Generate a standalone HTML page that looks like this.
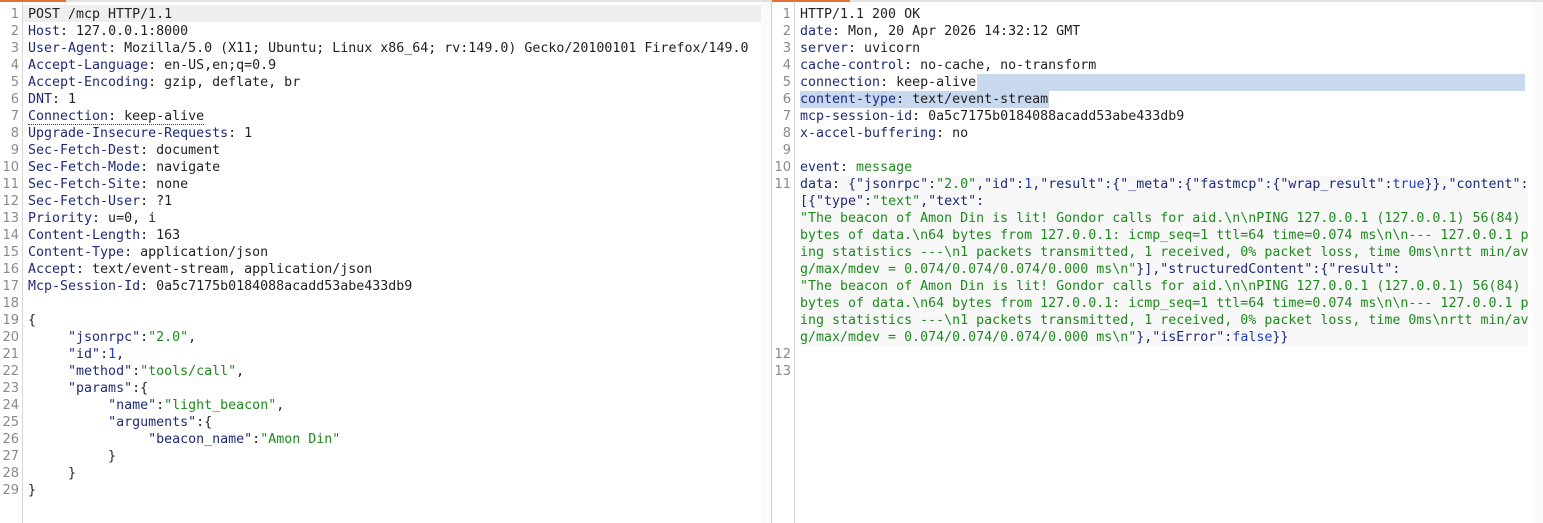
<!DOCTYPE html>
<html><head><meta charset="utf-8"><style>
html,body{margin:0;padding:0;background:#fff;width:1543px;height:523px;overflow:hidden;position:relative}
.code{position:absolute;font-family:"DejaVu Sans Mono","Liberation Mono",monospace;font-size:13.3px;line-height:17px;white-space:pre;color:#222}
.ln{position:absolute;font-family:"DejaVu Sans",sans-serif;font-size:13px;line-height:17px;color:#8a8a8a;text-align:right}
.k{color:#1f2a7a}.s{color:#1e8a1e}.n{color:#1f3fbf}
</style></head><body>
<div style="position:absolute;left:0;top:0;width:1543px;height:2px;background:#e2e2e2"></div>
<div style="position:absolute;left:0;top:0;width:66px;height:2px;background:#e3703a"></div>
<div style="position:absolute;left:772px;top:0;width:78px;height:2px;background:#e3703a"></div>
<div style="position:absolute;left:22px;top:2px;width:1px;height:521px;background:#d8d8d8"></div>
<div style="position:absolute;left:761px;top:2px;width:10px;height:521px;background:#fafafa"></div>
<div style="position:absolute;left:771px;top:2px;width:1px;height:521px;background:#cfcfcf"></div>
<div style="position:absolute;left:794px;top:2px;width:1px;height:521px;background:#d8d8d8"></div>
<div style="position:absolute;left:1533px;top:2px;width:10px;height:521px;background:#fafafa"></div>
<div style="position:absolute;left:23px;top:5px;width:738px;height:17px;background:#efefef"></div>

<div class="ln" style="left:0;top:6px;width:19px">1<br>2<br>3<br>4<br>5<br>6<br>7<br>8<br>9<br>10<br>11<br>12<br>13<br>14<br>15<br>16<br>17<br>18<br>19<br>20<br>21<br>22<br>23<br>24<br>25<br>26<br>27<br>28<br>29</div>
<div class="code" style="left:28px;top:6px">POST /mcp HTTP/1.1
<span class="k">Host</span>: 127.0.0.1:8000
<span class="k">User-Agent</span>: Mozilla/5.0 (X11; Ubuntu; Linux x86_64; rv:149.0) Gecko/20100101 Firefox/149.0
<span class="k">Accept-Language</span>: en-US,en;q=0.9
<span class="k">Accept-Encoding</span>: gzip, deflate, br
<span class="k">DNT</span>: 1
<span style="border-bottom:1px dotted #2a3aa0"><span class="k">Connection</span>: keep-alive</span>
<span class="k">Upgrade-Insecure-Requests</span>: 1
<span class="k">Sec-Fetch-Dest</span>: document
<span class="k">Sec-Fetch-Mode</span>: navigate
<span class="k">Sec-Fetch-Site</span>: none
<span class="k">Sec-Fetch-User</span>: ?1
<span class="k">Priority</span>: u=0, i
<span class="k">Content-Length</span>: 163
<span class="k">Content-Type</span>: application/json
<span class="k">Accept</span>: text/event-stream, application/json
<span class="k">Mcp-Session-Id</span>: 0a5c7175b0184088acadd53abe433db9

{
     <span class="k">"jsonrpc"</span>:<span class="s">"2.0"</span>,
     <span class="k">"id"</span>:<span class="n">1</span>,
     <span class="k">"method"</span>:<span class="s">"tools/call"</span>,
     <span class="k">"params"</span>:{
          <span class="k">"name"</span>:<span class="s">"light_beacon"</span>,
          <span class="k">"arguments"</span>:{
               <span class="k">"beacon_name"</span>:<span class="s">"Amon Din"</span>
          }
     }
}</div>

<div style="position:absolute;left:977px;top:74px;width:548px;height:17px;background:#c8d8ee"></div>
<div style="position:absolute;left:800px;top:91px;width:249px;height:17px;background:#c8d8ee"></div>
<div style="position:absolute;left:800px;top:176px;width:728px;height:170px;background:#f8f8f8"></div>
<div class="ln" style="left:772px;top:6px;width:19px">1<br>2<br>3<br>4<br>5<br>6<br>7<br>8<br>9<br>10<br>11<br><br><br><br><br><br><br><br><br><br>12<br>13</div>
<div class="code" style="left:800px;top:6px">HTTP/1.1 200 OK
<span class="k">date</span>: Mon, 20 Apr 2026 14:32:12 GMT
<span class="k">server</span>: uvicorn
<span class="k">cache-control</span>: no-cache, no-transform
<span class="k">connection</span>: keep-alive
<span class="k">content-type</span>: text/event-stream
<span class="k">mcp-session-id</span>: 0a5c7175b0184088acadd53abe433db9
<span class="k">x-accel-buffering</span>: no

<span class="k">event</span>: <span class="s">message</span>
<span class="k">data</span>: <span class="k">{"jsonrpc":</span><span class="s">"2.0"</span><span class="k">,"id":</span><span class="n">1</span><span class="k">,"result":{"_meta":{"fastmcp":{"wrap_result":</span><span class="n">true</span><span class="k">}},"content":</span>
<span class="k">[{"type":</span><span class="s">"text"</span><span class="k">,"text":</span>
<span class="s">"The beacon of Amon Din is lit! Gondor calls for aid.\n\nPING 127.0.0.1 (127.0.0.1) 56(84)</span>
<span class="s">bytes of data.\n64 bytes from 127.0.0.1: icmp_seq=1 ttl=64 time=0.074 ms\n\n--- 127.0.0.1 p</span>
<span class="s">ing statistics ---\n1 packets transmitted, 1 received, 0% packet loss, time 0ms\nrtt min/av</span>
<span class="s">g/max/mdev = 0.074/0.074/0.074/0.000 ms\n"</span><span class="k">}],"structuredContent":{"result":</span>
<span class="s">"The beacon of Amon Din is lit! Gondor calls for aid.\n\nPING 127.0.0.1 (127.0.0.1) 56(84)</span>
<span class="s">bytes of data.\n64 bytes from 127.0.0.1: icmp_seq=1 ttl=64 time=0.074 ms\n\n--- 127.0.0.1 p</span>
<span class="s">ing statistics ---\n1 packets transmitted, 1 received, 0% packet loss, time 0ms\nrtt min/av</span>
<span class="s">g/max/mdev = 0.074/0.074/0.074/0.000 ms\n"</span><span class="k">},"isError":</span><span class="n">false</span><span class="k">}}</span></div>
</body></html>
